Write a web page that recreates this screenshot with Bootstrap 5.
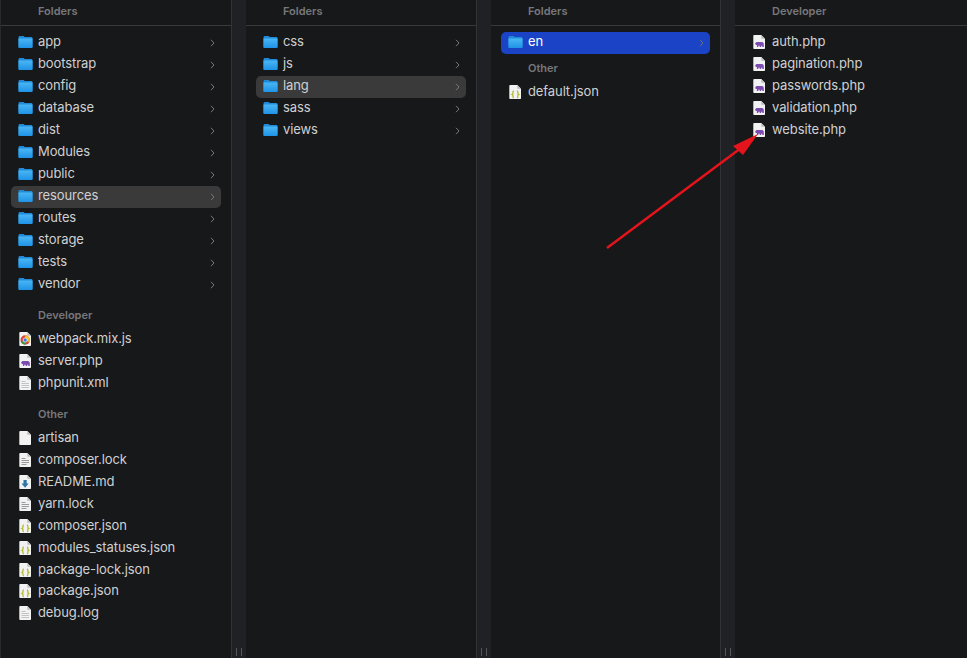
<!DOCTYPE html>
<html lang="en">
<head>
<meta charset="utf-8">
<title>Finder columns</title>
<link href="https://cdn.jsdelivr.net/npm/bootstrap@5.3.0/dist/css/bootstrap.min.css" rel="stylesheet">
<style>
html,body{height:100%;margin:0;background:#17181a;overflow:hidden}
body{font-family:Inter,"Liberation Sans",sans-serif;font-size:13px;letter-spacing:-.1px;color:#d0d0d1;width:967px;height:658px;position:relative}
.fcols{height:658px}
.fcol{background:#17181a;min-width:0;flex:none}
.fc1{width:231px;border-left:1px solid #2a2a2c}
.fc2{width:230px}
.fc3{width:229px}
.fc4{width:232px}
.fgut{width:15px;flex:none;background:#202124;border-left:1px solid #333336;position:relative}
.fgrip{position:absolute;left:4px;bottom:2px;width:6px;height:8px;border-left:1px solid #55565a;border-right:1px solid #55565a}
.fhead{height:26px;border-bottom:1px solid #39393c;font-size:11px;font-weight:600;letter-spacing:0;color:#77787b;line-height:22px;margin-bottom:6px}
.fhd1{padding-left:37px}.fhd2{padding-left:37px}
.frows{padding:0 10px}
.frow{height:22px;line-height:18px;border-radius:5px;padding:0 6px 4px 7px;white-space:nowrap}
.fico{width:15px;height:15px;flex:none;margin:3px 5px 0 0}
.fchev{margin-left:auto;width:5px;height:8px;flex:none;margin-top:4px}
.fsel{background:#3a3a3b}
.fact{background:#1a43c6;color:#fff}
.fact .fchev{opacity:.9}
.fsec{height:11px;font-size:11px;font-weight:600;letter-spacing:0;color:#77787b;padding-left:27px;line-height:11px}
.fsec-dev{margin-top:14px;margin-bottom:8px}
.fsec-oth{margin-top:14px;margin-bottom:8px}
.fsec-en{margin-top:9px;margin-bottom:8px}
.fshift{margin-top:-1px}
.farrow{position:absolute;left:0;top:0;width:967px;height:658px;pointer-events:none}
.fdefs{position:absolute;width:0;height:0}
</style>
</head>
<body>
<svg class="fdefs" aria-hidden="true">
<defs>
<linearGradient id="gf" x1="0" y1="0" x2="0" y2="1"><stop offset="0" stop-color="#4ab6f5"/><stop offset="1" stop-color="#1f93e6"/></linearGradient>
<symbol id="i-folder" viewBox="0 0 15 15"><path d="M.5 2.600C.5 1.600 1 1 2 1h3.200c.7 0 1 .6 1.600 1h6.400c1 0 1.300.6 1.300 1.400v8.400c0 .8-.5 1.200-1.300 1.200H1.800C1 13 .5 12.600.5 11.800z" fill="#1f8ad8"/><path d="M.5 3.400h14v8.400c0 .8-.5 1.200-1.300 1.200H1.800C1 13 .5 12.600.5 11.800z" fill="url(#gf)"/></symbol>
<symbol id="i-blank" viewBox="0 0 15 15"><path d="M2.300 0h7l3.700 3.700V13.200c0 .5-.3.800-.8.800H2.100c-.5 0-.8-.3-.8-.8V.8c0-.5.3-.8 1-.8z" fill="#f2f2f2"/><path d="M9.300 0v3.700H13z" fill="#bdbdbd"/></symbol>
<symbol id="i-php" viewBox="0 0 15 15"><use href="#i-blank"/><path d="M3.200 8.600c.2-1.100 1-1.600 2.200-1.600h3.800c1.400 0 2.500.6 2.600 2v3h-1.500v-1.300H9.200V12H7.700v-1.300H6.300V12H4.900v-1.900c-.9 0-1.800-.5-1.700-1.500z" fill="#7b4bb0"/></symbol>
<symbol id="i-text" viewBox="0 0 15 15"><use href="#i-blank"/><path d="M3.500 5.500h4M3.500 7.500h7.500M3.500 9.500h7.500M3.500 11.500h5" stroke="#9a9a9a" stroke-width="1" fill="none"/></symbol>
<symbol id="i-grey" viewBox="0 0 15 15"><use href="#i-blank"/><path d="M3.500 5.500h4M3.500 7.500h7.500M3.500 9.500h7.500M3.500 11.500h7.500" stroke="#c4c4c4" stroke-width="1.200" fill="none"/></symbol>
<symbol id="i-json" viewBox="0 0 15 15"><use href="#i-blank"/><path d="M5.800 6c-1.100.2-.9 1.300-.9 2.200 0 .6-.2 1-.7 1.200.5.200.7.600.7 1.200 0 .9-.2 2 .9 2.200M9 6c1.100.2.900 1.300.9 2.200 0 .6.200 1 .7 1.200-.5.200-.7.600-.7 1.200 0 .9.200 2-.9 2.200" stroke="#b4b82a" stroke-width="1.300" fill="none"/></symbol>
<symbol id="i-md" viewBox="0 0 15 15"><use href="#i-blank"/><path d="M5.500 5h3.200v3.500h2l-3.600 4.300L3.500 8.500h2z" fill="#2f76a8"/></symbol>
<symbol id="i-js" viewBox="0 0 15 15"><use href="#i-blank"/><circle cx="7.200" cy="8" r="4.700" fill="#dc4437"/><path d="M7.200 8l-4.070 2.350A4.700 4.700 0 0 0 7.200 12.700z" fill="#2fa04f"/><path d="M7.200 3.300A4.700 4.700 0 0 1 11.270 10.350L7.200 8z" fill="#f5c518"/><circle cx="7.200" cy="8" r="2.100" fill="#3b78e7" stroke="#fff" stroke-width=".7"/></symbol>
<symbol id="i-chev" viewBox="0 0 5 8"><path d="M1 .8 4 4 1 7.200" fill="none" stroke="#77787b" stroke-width="1"/></symbol>
</defs>
</svg>
<main class="d-flex fcols">
<section class="fcol fc1">
<div class="fhead fhd1">Folders</div>
<div class="frows">
<div class="frow d-flex align-items-center"><svg class="fico"><use href="#i-folder"/></svg>app<svg class="fchev"><use href="#i-chev"/></svg></div>
<div class="frow d-flex align-items-center"><svg class="fico"><use href="#i-folder"/></svg>bootstrap<svg class="fchev"><use href="#i-chev"/></svg></div>
<div class="frow d-flex align-items-center"><svg class="fico"><use href="#i-folder"/></svg>config<svg class="fchev"><use href="#i-chev"/></svg></div>
<div class="frow d-flex align-items-center"><svg class="fico"><use href="#i-folder"/></svg>database<svg class="fchev"><use href="#i-chev"/></svg></div>
<div class="frow d-flex align-items-center"><svg class="fico"><use href="#i-folder"/></svg>dist<svg class="fchev"><use href="#i-chev"/></svg></div>
<div class="frow d-flex align-items-center"><svg class="fico"><use href="#i-folder"/></svg>Modules<svg class="fchev"><use href="#i-chev"/></svg></div>
<div class="frow d-flex align-items-center"><svg class="fico"><use href="#i-folder"/></svg>public<svg class="fchev"><use href="#i-chev"/></svg></div>
<div class="frow d-flex align-items-center fsel"><svg class="fico"><use href="#i-folder"/></svg>resources<svg class="fchev"><use href="#i-chev"/></svg></div>
<div class="frow d-flex align-items-center"><svg class="fico"><use href="#i-folder"/></svg>routes<svg class="fchev"><use href="#i-chev"/></svg></div>
<div class="frow d-flex align-items-center"><svg class="fico"><use href="#i-folder"/></svg>storage<svg class="fchev"><use href="#i-chev"/></svg></div>
<div class="frow d-flex align-items-center"><svg class="fico"><use href="#i-folder"/></svg>tests<svg class="fchev"><use href="#i-chev"/></svg></div>
<div class="frow d-flex align-items-center"><svg class="fico"><use href="#i-folder"/></svg>vendor<svg class="fchev"><use href="#i-chev"/></svg></div>
<div class="fsec fsec-dev">Developer</div>
<div class="frow d-flex align-items-center"><svg class="fico"><use href="#i-js"/></svg>webpack.mix.js</div>
<div class="frow d-flex align-items-center"><svg class="fico"><use href="#i-php"/></svg>server.php</div>
<div class="frow d-flex align-items-center"><svg class="fico"><use href="#i-grey"/></svg>phpunit.xml</div>
<div class="fsec fsec-oth">Other</div>
<div class="frow d-flex align-items-center"><svg class="fico"><use href="#i-blank"/></svg>artisan</div>
<div class="frow d-flex align-items-center"><svg class="fico"><use href="#i-text"/></svg>composer.lock</div>
<div class="frow d-flex align-items-center"><svg class="fico"><use href="#i-md"/></svg>README.md</div>
<div class="frow d-flex align-items-center"><svg class="fico"><use href="#i-text"/></svg>yarn.lock</div>
<div class="frow d-flex align-items-center"><svg class="fico"><use href="#i-json"/></svg>composer.json</div>
<div class="frow d-flex align-items-center"><svg class="fico"><use href="#i-json"/></svg>modules_statuses.json</div>
<div class="frow d-flex align-items-center"><svg class="fico"><use href="#i-json"/></svg>package-lock.json</div>
<div class="frow d-flex align-items-center fshift"><svg class="fico"><use href="#i-json"/></svg>package.json</div>
<div class="frow d-flex align-items-center"><svg class="fico"><use href="#i-grey"/></svg>debug.log</div>
</div>
</section>
<div class="fgut"><span class="fgrip"></span></div>
<section class="fcol fc2">
<div class="fhead fhd2">Folders</div>
<div class="frows">
<div class="frow d-flex align-items-center"><svg class="fico"><use href="#i-folder"/></svg>css<svg class="fchev"><use href="#i-chev"/></svg></div>
<div class="frow d-flex align-items-center"><svg class="fico"><use href="#i-folder"/></svg>js<svg class="fchev"><use href="#i-chev"/></svg></div>
<div class="frow d-flex align-items-center fsel"><svg class="fico"><use href="#i-folder"/></svg>lang<svg class="fchev"><use href="#i-chev"/></svg></div>
<div class="frow d-flex align-items-center"><svg class="fico"><use href="#i-folder"/></svg>sass<svg class="fchev"><use href="#i-chev"/></svg></div>
<div class="frow d-flex align-items-center"><svg class="fico"><use href="#i-folder"/></svg>views<svg class="fchev"><use href="#i-chev"/></svg></div>
</div>
</section>
<div class="fgut"><span class="fgrip"></span></div>
<section class="fcol fc3">
<div class="fhead fhd2">Folders</div>
<div class="frows">
<div class="frow d-flex align-items-center fact"><svg class="fico"><use href="#i-folder"/></svg>en<svg class="fchev"><use href="#i-chev"/></svg></div>
<div class="fsec fsec-en">Other</div>
<div class="frow d-flex align-items-center"><svg class="fico"><use href="#i-json"/></svg>default.json</div>
</div>
</section>
<div class="fgut"><span class="fgrip"></span></div>
<section class="fcol fc4">
<div class="fhead fhd2">Developer</div>
<div class="frows">
<div class="frow d-flex align-items-center"><svg class="fico"><use href="#i-php"/></svg>auth.php</div>
<div class="frow d-flex align-items-center"><svg class="fico"><use href="#i-php"/></svg>pagination.php</div>
<div class="frow d-flex align-items-center"><svg class="fico"><use href="#i-php"/></svg>passwords.php</div>
<div class="frow d-flex align-items-center"><svg class="fico"><use href="#i-php"/></svg>validation.php</div>
<div class="frow d-flex align-items-center"><svg class="fico"><use href="#i-php"/></svg>website.php</div>
</div>
</section>
</main>
<svg class="farrow" viewBox="0 0 967 658" aria-hidden="true"><path d="M607 248 745 145" stroke="#e3141b" stroke-width="2.500" fill="none"/><path d="M758 134 733 146 743 155z" fill="#e3141b"/></svg>
<script src="https://cdn.jsdelivr.net/npm/bootstrap@5.3.0/dist/js/bootstrap.bundle.min.js"></script>
</body>
</html>
